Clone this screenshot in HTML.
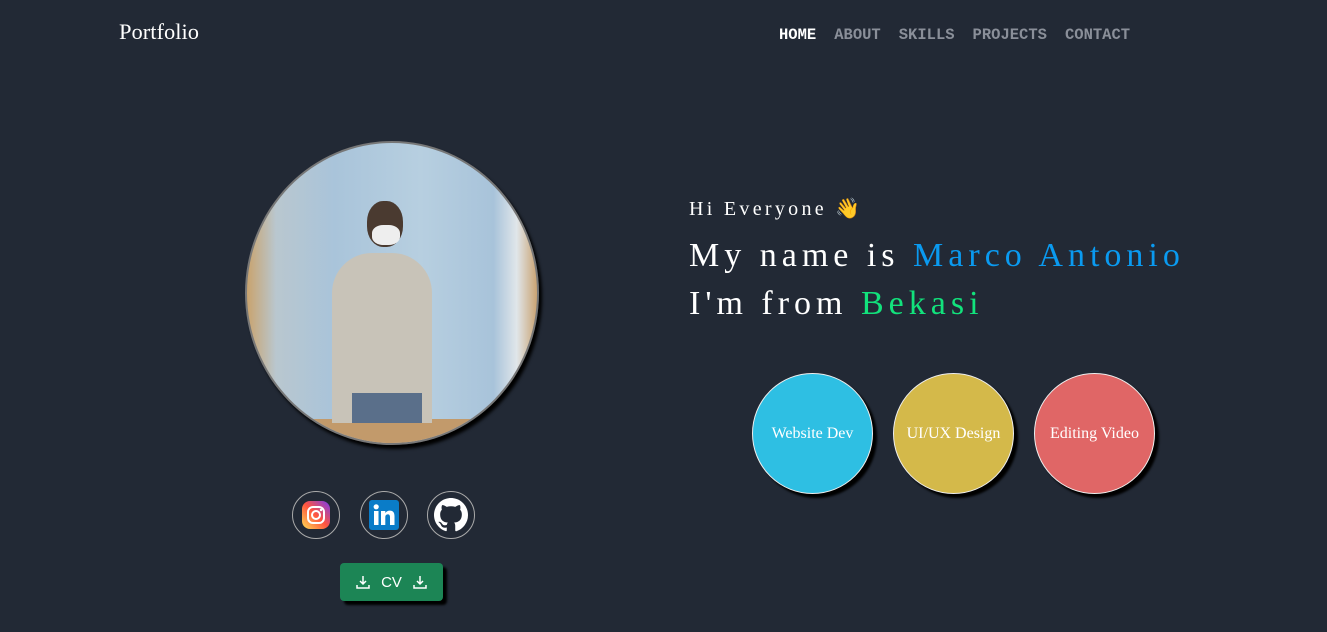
<!DOCTYPE html>
<html><head><meta charset="utf-8"><style>
*{margin:0;padding:0;box-sizing:border-box}
body{width:1327px;height:632px;background:#222935;overflow:hidden;position:relative;font-family:"Liberation Serif",serif;color:#fff}
.logo{position:absolute;left:119px;top:19px;font-size:22.5px}
.nav{position:absolute;left:779px;top:26px;font-family:"Liberation Mono",monospace;font-weight:bold;font-size:15.5px;color:#8a8f99}
.nav span{margin-right:18px}.nav span:first-child{color:#fff}
.photo{position:absolute;left:245px;top:141px;width:294px;height:304px;border-radius:50%;overflow:hidden;border:2px solid #777;box-shadow:3px 4px 3px #000;
background:linear-gradient(90deg,#c9a36e 0%,#b9c7cf 10%,#a9c4da 30%,#b7cfe0 60%,#a8c3da 85%,#e0e6ea 93%,#caa372 100%)}
.person{position:absolute;left:85px;top:110px;width:100px;height:170px;background:#c8c3b8;border-radius:40px 40px 0 0}
.legs{position:absolute;left:105px;top:250px;width:70px;height:30px;background:#5a6f8a}
.head{position:absolute;left:120px;top:58px;width:36px;height:46px;background:#4a3a30;border-radius:45%}
.mask{position:absolute;left:125px;top:82px;width:28px;height:20px;background:#eee;border-radius:40%}
.floor{position:absolute;left:0;top:276px;width:100%;height:40px;background:#c29a6b}
.soc{position:absolute;top:491px;width:48px;height:48px;border-radius:50%;border:1.5px solid #aaa;display:flex;align-items:center;justify-content:center}
.cv{position:absolute;left:340px;top:563px;width:103px;height:38px;background:#1c8555;border-radius:4px;box-shadow:4px 4px 2px #000;color:#fff;font-family:"Liberation Sans",sans-serif;font-size:15px;display:flex;align-items:center;justify-content:space-around;padding:0 10px}
.hi{position:absolute;left:689px;top:196px;font-size:20px;letter-spacing:3.3px}
.h{position:absolute;left:689px;font-size:34px;letter-spacing:5px}
.c{position:absolute;top:373px;width:121px;height:121px;border-radius:50%;box-shadow:4px 4px 2px #000;color:#fff;font-size:16px;display:flex;align-items:center;justify-content:center;border:1px solid #eee}
</style></head><body>
<div class="logo">Portfolio</div>
<div class="nav"><span>HOME</span><span>ABOUT</span><span>SKILLS</span><span>PROJECTS</span><span>CONTACT</span></div>
<div class="photo"><div class="floor"></div><div class="person"></div><div class="legs"></div><div class="head"></div><div class="mask"></div></div>
<div class="soc" style="left:292px"><svg width="32" height="32" viewBox="0 0 32 32"><defs><linearGradient id="g" x1="0" y1="1" x2="1" y2="0"><stop offset="0" stop-color="#fd5"/><stop offset=".5" stop-color="#ff543e"/><stop offset="1" stop-color="#7a3cf0"/></linearGradient></defs><rect x="2" y="2" width="28" height="28" rx="8" fill="url(#g)"/><rect x="8" y="8" width="16" height="16" rx="5" fill="none" stroke="#fff" stroke-width="2"/><circle cx="16" cy="16" r="4" fill="none" stroke="#fff" stroke-width="2"/><circle cx="21" cy="11" r="1.2" fill="#fff"/></svg></div>
<div class="soc" style="left:360px"><svg width="30" height="30" viewBox="0 0 30 30"><rect width="30" height="30" rx="3" fill="#0a7cc8"/><rect x="5" y="11" width="4.5" height="14" fill="#fff"/><circle cx="7.2" cy="6.8" r="2.6" fill="#fff"/><path d="M12 11h4.3v2c1-1.6 2.6-2.4 4.6-2.4 3.3 0 4.6 2 4.6 5.6V25H21v-7.8c0-1.8-.6-2.8-2.2-2.8-1.7 0-2.5 1.2-2.5 2.8V25H12z" fill="#fff"/></svg></div>
<div class="soc" style="left:427px"><svg width="34" height="34" viewBox="0 0 16 16"><path fill="#fff" d="M8 0C3.58 0 0 3.58 0 8c0 3.54 2.29 6.53 5.47 7.59.4.07.55-.17.55-.38v-1.33c-2.23.48-2.7-1.07-2.7-1.07-.36-.92-.89-1.17-.89-1.17-.73-.5.05-.49.05-.49.8.06 1.23.83 1.23.83.72 1.22 1.87.87 2.33.66.07-.52.28-.87.5-1.07-1.78-.2-3.64-.89-3.64-3.95 0-.87.31-1.59.82-2.15-.08-.2-.36-1.02.08-2.12 0 0 .67-.21 2.2.82.64-.18 1.32-.27 2-.27.68 0 1.36.09 2 .27 1.53-1.04 2.2-.82 2.2-.82.44 1.1.16 1.92.08 2.12.51.56.82 1.27.82 2.15 0 3.07-1.87 3.75-3.65 3.95.29.25.54.73.54 1.48v2.2c0 .21.15.46.55.38A8.013 8.013 0 0 0 16 8c0-4.42-3.58-8-8-8z"/></svg></div>
<div class="cv"><svg width="16" height="16" viewBox="0 0 16 16" fill="none" stroke="#fff" stroke-width="1.5"><path d="M8 2v8M5 7l3 3 3-3M2 11v3h12v-3"/></svg><span>CV</span><svg width="16" height="16" viewBox="0 0 16 16" fill="none" stroke="#fff" stroke-width="1.5"><path d="M8 2v8M5 7l3 3 3-3M2 11v3h12v-3"/></svg></div>
<div class="hi">Hi Everyone <span style="font-family:'Noto Color Emoji',sans-serif">👋</span></div>
<div class="h" style="top:237px">My name is <span style="color:#0a9af0">Marco Antonio</span></div>
<div class="h" style="top:285px">I'm from <span style="color:#12e27c">Bekasi</span></div>
<div class="c" style="left:752px;background:#2ebfe3">Website Dev</div>
<div class="c" style="left:893px;background:#d4b94a">UI/UX Design</div>
<div class="c" style="left:1034px;background:#e06666">Editing Video</div>
</body></html>
